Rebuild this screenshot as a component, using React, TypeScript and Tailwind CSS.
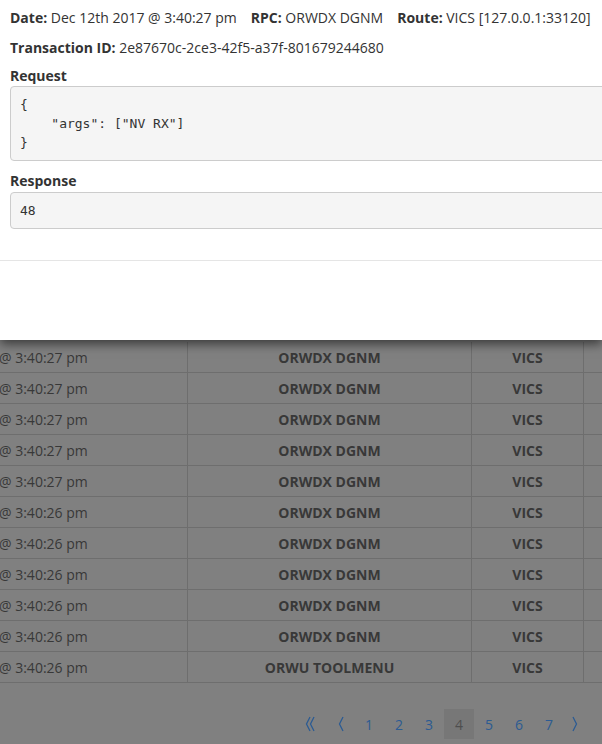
import React from 'react';

const rows = [
  ['@ 3:40:27 pm', 'ORWDX DGNM', 'VICS'],
  ['@ 3:40:27 pm', 'ORWDX DGNM', 'VICS'],
  ['@ 3:40:27 pm', 'ORWDX DGNM', 'VICS'],
  ['@ 3:40:27 pm', 'ORWDX DGNM', 'VICS'],
  ['@ 3:40:27 pm', 'ORWDX DGNM', 'VICS'],
  ['@ 3:40:26 pm', 'ORWDX DGNM', 'VICS'],
  ['@ 3:40:26 pm', 'ORWDX DGNM', 'VICS'],
  ['@ 3:40:26 pm', 'ORWDX DGNM', 'VICS'],
  ['@ 3:40:26 pm', 'ORWDX DGNM', 'VICS'],
  ['@ 3:40:26 pm', 'ORWDX DGNM', 'VICS'],
  ['@ 3:40:26 pm', 'ORWU TOOLMENU', 'VICS'],
];

function Chevron({ double }: { double?: boolean }) {
  return (
    <svg width={double ? 12 : 8} height="18" viewBox={double ? '0 0 12 18' : '0 0 8 18'} fill="none" stroke="#2c5b92" strokeWidth="1.3">
      {double ? (
        <>
          <path d="M6 2 L2.5 9 L6 16" />
          <path d="M10 2 L6.5 9 L10 16" />
        </>
      ) : (
        <path d="M6 2 L2.5 9 L6 16" />
      )}
    </svg>
  );
}

function ChevronRight() {
  return (
    <svg width="8" height="18" viewBox="0 0 8 18" fill="none" stroke="#2c5b92" strokeWidth="1.3">
      <path d="M2 2 L5.5 9 L2 16" />
    </svg>
  );
}

export default function App() {
  return (
    <div className="w-[602px] h-[744px] overflow-hidden bg-[#808080] font-['Open_Sans',sans-serif] text-[14px]">
      {/* modal */}
      <div className="relative z-10 h-[340px] bg-white shadow-[0_4px_10px_rgba(0,0,0,0.55)]">
        <div className="h-[260px] px-[10px] pt-[6px] text-[#333]">
          <div className="flex h-[22px] items-center whitespace-nowrap">
            <span><b className="font-bold">Date:</b> Dec 12th 2017 @ 3:40:27 pm</span>
            <span className="ml-[14px]"><b className="font-bold">RPC:</b> ORWDX DGNM</span>
            <span className="ml-[14px]"><b className="font-bold">Route:</b> VICS [127.0.0.1:33120]</span>
          </div>
          <div className="mt-[8px] flex h-[22px] items-center whitespace-nowrap">
            <span><b className="font-bold">Transaction ID:</b> 2e87670c-2ce3-42f5-a37f-801679244680</span>
          </div>
          <div className="mt-[8px] h-[20px] font-bold leading-[20px]">Request</div>
          <pre className="mr-[-20px] rounded-[4px] border border-[#ccc] bg-[#f5f5f5] px-[9px] py-[8px] font-['DejaVu_Sans_Mono',monospace] text-[13px] leading-[19px] text-[#333]">
{`{
    "args": ["NV RX"]
}`}
          </pre>
          <div className="mt-[10px] h-[20px] font-bold leading-[20px]">Response</div>
          <pre className="mr-[-20px] mt-[1px] rounded-[4px] border border-[#ccc] bg-[#f5f5f5] px-[9px] py-[8px] font-['DejaVu_Sans_Mono',monospace] text-[13px] leading-[19px] text-[#333]">
48
          </pre>
        </div>
        <div className="h-[80px] border-t border-[#e5e5e5]" />
      </div>

      {/* table under backdrop */}
      <div className="pt-[2px]">
        {rows.map((r, i) => (
          <div key={i} className="flex h-[31px] border-b border-[#6e6e6e] text-[#383838]">
            <div className="flex w-[189px] items-center border-r border-[#6e6e6e] -ml-[1px] whitespace-nowrap">{r[0]}</div>
            <div className="flex w-[284px] items-center justify-center border-r border-[#6e6e6e] font-bold">{r[1]}</div>
            <div className="flex w-[112px] items-center justify-center border-r border-[#6e6e6e] font-bold">{r[2]}</div>
            <div className="flex-1" />
          </div>
        ))}
      </div>

      {/* pagination */}
      <div className="mt-[26px] flex h-[30px] w-[586px] items-center justify-end text-[#2c5b92]">
        <div className="flex h-[30px] w-[36px] items-center justify-center"><Chevron double /></div>
        <div className="flex h-[30px] w-[26px] items-center justify-center"><Chevron /></div>
        {[1, 2, 3, 4, 5, 6, 7].map((n) => (
          <div
            key={n}
            className={
              n === 4
                ? 'flex h-[30px] w-[30px] items-center justify-center bg-[#777] text-[#4e4e4e]'
                : 'flex h-[30px] w-[30px] items-center justify-center'
            }
          >
            {n}
          </div>
        ))}
        <div className="flex h-[30px] w-[22px] items-center justify-center"><ChevronRight /></div>
      </div>
    </div>
  );
}
